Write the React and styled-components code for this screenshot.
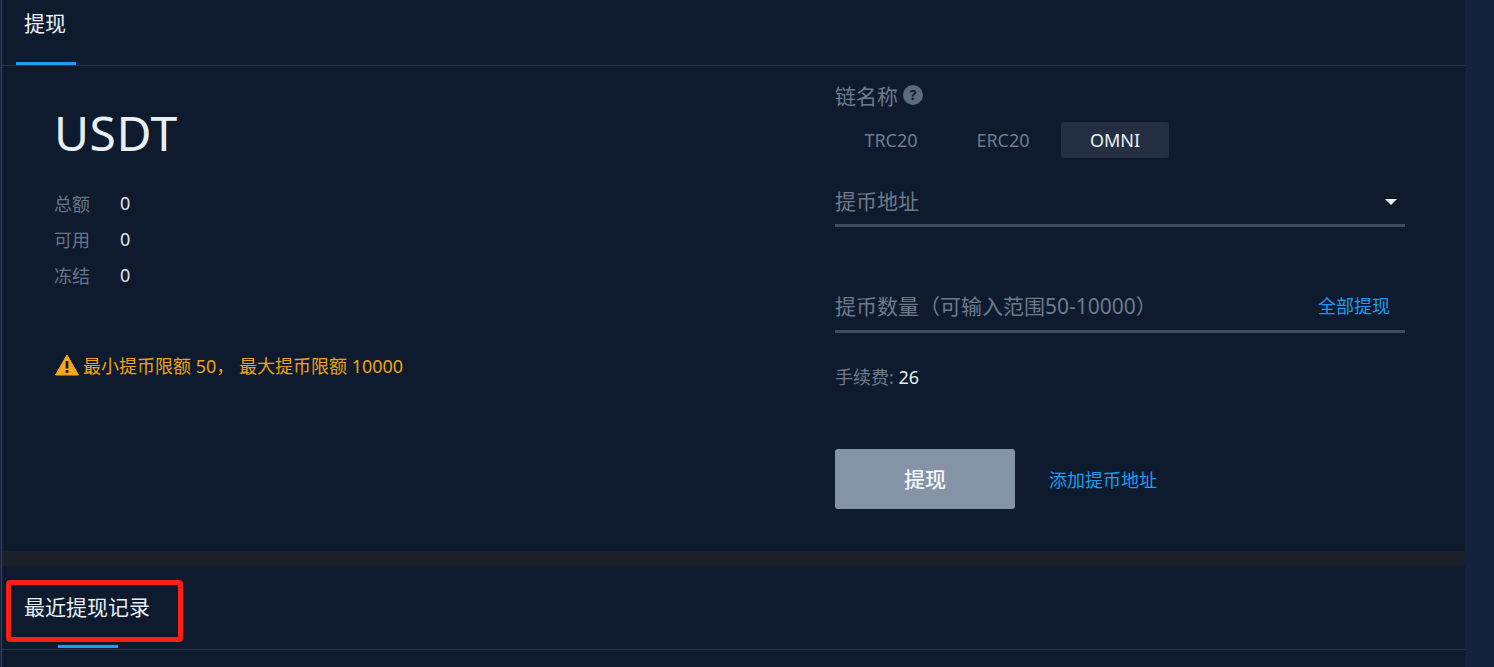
import React from "react";
import styled, { createGlobalStyle } from "styled-components";

const Global = createGlobalStyle`
  html, body { margin: 0; padding: 0; height: 100%; overflow: hidden; background: #13213a; }
  * { box-sizing: border-box; }
  body { font-family: "Noto Sans", "Noto Sans CJK SC", sans-serif; }
`;

const Page = styled.div`
  width: 1464px;
  height: 667px;
  margin-left: 1px;
  border-left: 1px solid #3c4759;
  background: #0e1b2e;
  position: relative;
  overflow: hidden;
`;
const TabBar = styled.div`
  height: 66px;
  border-bottom: 1px solid #2a3648;
  padding-left: 14px;
  display: flex;
`;
const Tab = styled.div`
  width: 60px;
  height: 65px;
  border-bottom: 3px solid #1f9bf0;
  padding-left: 8px;
  font-size: 21px;
  line-height: 46px;
  color: #eef2f6;
`;
const WithdrawSection = styled.section`
  height: 485px;
  display: flex;
`;
const InfoColumn = styled.div`
  width: 833px;
  padding: 36px 0 0 52px;
`;
const Coin = styled.h1`
  margin: 0;
  font-size: 48px;
  font-weight: 400;
  line-height: 62px;
  letter-spacing: 0.5px;
  color: #e9eff5;
`;
const Stats = styled.div`
  margin-top: 21px;
`;
const StatRow = styled.div`
  display: flex;
  height: 36px;
  align-items: center;
  font-size: 18px;
`;
const StatLabel = styled.span`
  width: 66px;
  color: #687587;
`;
const StatValue = styled.span`
  color: #dfe6ee;
  font-size: 18px;
`;
const Notice = styled.div`
  margin-top: 59px;
  display: flex;
  align-items: center;
  gap: 4px;
  font-size: 18px;
  color: #efa312;
  margin-left: 1px;
  white-space: pre;
`;
const FormColumn = styled.div`
  width: 570px;
  padding-top: 13px;
`;
const ChainLabel = styled.div`
  display: flex;
  align-items: center;
  gap: 5px;
  height: 32px;
  font-size: 21px;
  color: #6d7a8c;
`;
const HelpBadge = styled.span`
  width: 20px;
  height: 20px;
  border-radius: 50%;
  background: #5c6a80;
  color: #0e1b2e;
  font-size: 14px;
  font-weight: 700;
  text-align: center;
  line-height: 20px;
`;
const ChainTabs = styled.div`
  margin: 11px 0 0 2px;
  display: flex;
  gap: 4px;
`;
const Chain = styled.div`
  width: 108px;
  height: 36px;
  border-radius: 3px;
  background: ${(p) => (p.$active ? "#252f42" : "transparent")};
  color: ${(p) => (p.$active ? "#e9eff5" : "#6d7a8c")};
  font-size: 18px;
  line-height: 36px;
  text-align: center;
`;
const Field = styled.div`
  height: 48px;
  margin-top: ${(p) => p.$top}px;
  border-bottom: 3px solid #3e4a60;
  display: flex;
  justify-content: space-between;
  align-items: center;
  padding-right: ${(p) => p.$right}px;
  padding-bottom: ${(p) => p.$bottom}px;
  font-size: 21px;
  color: #6d7a8c;
`;
const Caret = styled.span`
  width: 0;
  height: 0;
  margin-right: -7px;
  margin-top: 4px;
  border-left: 6px solid transparent;
  border-right: 6px solid transparent;
  border-top: 6px solid #f2f5f8;
`;
const AllLink = styled.span`
  color: #1f9bf0;
  font-size: 18px;
`;
const Fee = styled.div`
  margin-top: 31px;
  height: 26px;
  line-height: 26px;
  font-size: 18px;
  color: #6d7a8c;
`;
const FeeValue = styled.span`
  color: #e9eff5;
`;
const Actions = styled.div`
  margin-top: 59px;
  display: flex;
  align-items: center;
  gap: 34px;
`;
const Submit = styled.div`
  width: 180px;
  height: 60px;
  border-radius: 3px;
  background: #8593a6;
  color: #f5f7f9;
  font-size: 21px;
  font-weight: 500;
  line-height: 60px;
  text-align: center;
`;
const AddLink = styled.span`
  color: #1f9bf0;
  font-size: 18px;
`;
const Divider = styled.div`
  height: 15px;
  background: #1c202b;
`;
const RecordBar = styled.div`
  height: 84px;
  border-bottom: 1px solid #2a3648;
  position: relative;
`;
const RecordTitle = styled.div`
  padding: 24px 0 0 22px;
  font-size: 21px;
  line-height: 34px;
  color: #e9eff5;
`;
const RecordUnderline = styled.div`
  position: absolute;
  left: 56px;
  bottom: 1px;
  width: 60px;
  height: 3px;
  background: #1f9bf0;
`;
const Highlight = styled.div`
  position: absolute;
  left: 4px;
  top: 14px;
  width: 177px;
  height: 62px;
  border: 5px solid #fb2015;
  border-radius: 4px;
`;

const Warn = () => (
  <svg width="24" height="22" viewBox="0 0 24 22" aria-hidden="true">
    <path d="M12 1 L23.5 21 H0.5 Z" fill="#f5a915" stroke="#f5a915" strokeLinejoin="round" />
    <rect x="10.6" y="7" width="2.8" height="7.5" fill="#0e1b2e" />
    <rect x="10.6" y="16" width="2.8" height="2.8" fill="#0e1b2e" />
  </svg>
);

export default function App() {
  return (
    <>
      <Global />
      <Page>
        <TabBar>
          <Tab>提现</Tab>
        </TabBar>
        <WithdrawSection>
          <InfoColumn>
            <Coin>USDT</Coin>
            <Stats>
              <StatRow><StatLabel>总额</StatLabel><StatValue>0</StatValue></StatRow>
              <StatRow><StatLabel>可用</StatLabel><StatValue>0</StatValue></StatRow>
              <StatRow><StatLabel>冻结</StatLabel><StatValue>0</StatValue></StatRow>
            </Stats>
            <Notice><Warn />最小提币限额 50， 最大提币限额 10000</Notice>
          </InfoColumn>
          <FormColumn>
            <ChainLabel>链名称<HelpBadge>?</HelpBadge></ChainLabel>
            <ChainTabs>
              <Chain>TRC20</Chain>
              <Chain>ERC20</Chain>
              <Chain $active>OMNI</Chain>
            </ChainTabs>
            <Field $top={21} $right={15} $bottom={4}>提币地址<Caret /></Field>
            <Field $top={58} $right={15} $bottom={6}>提币数量（可输入范围50-10000）<AllLink>全部提现</AllLink></Field>
            <Fee>手续费: <FeeValue>26</FeeValue></Fee>
            <Actions>
              <Submit>提现</Submit>
              <AddLink>添加提币地址</AddLink>
            </Actions>
          </FormColumn>
        </WithdrawSection>
        <Divider />
        <RecordBar>
          <RecordTitle>最近提现记录</RecordTitle>
          <RecordUnderline />
          <Highlight />
        </RecordBar>
      </Page>
    </>
  );
}
